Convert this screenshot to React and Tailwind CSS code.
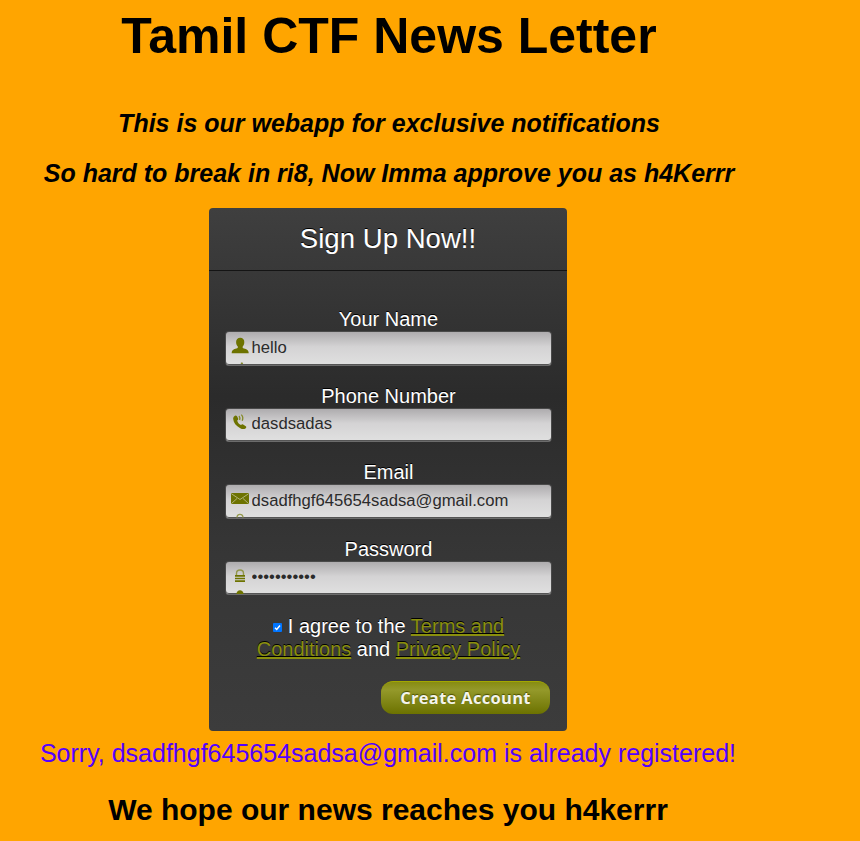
const INPUT =
  "h-[34.500px] w-full overflow-hidden rounded-[4px] border border-t-[#4a4a4a] border-x-[#4a4a4a] border-b-[#6c6c6c] bg-[linear-gradient(to_bottom,#aeacae_0%,#d4d3d4_45%,#e0e0e0_100%)] shadow-[inset_0_-1px_0_#555] flex text-[16.67px] text-[#2b2b2b] [text-shadow:0_1px_0_#fff]";

function UserIcon() {
  return (
    <svg width="26" height="33" viewBox="0 0 26 33" fill="#6d7300">
      <path d="M14.200 5.800c2.600 0 4.100 1.600 4.100 4.200 0 2-.7 3.600-1.700 4.700 0 1 .3 1.500 1.400 1.900 2.700.8 4.700 1.500 4.700 4.700H5.700c0-3.200 2-3.900 4.700-4.700 1.100-.4 1.500-.9 1.500-1.900-1.100-1.100-1.800-2.700-1.800-4.700 0-2.600 1.600-4.200 4.100-4.200z" />
      <path d="M15 30.500h1.500l.7 1.500h-2.500z" opacity=".8" />
    </svg>
  );
}

function PhoneIcon() {
  return (
    <svg width="26" height="33" viewBox="0 0 26 33" fill="none">
      <path
        d="M8.300 7.200c.8-.8 2-.9 2.700.1l1.200 2.200c.3.800-.1 1.300-1 1.900.5 2.200 1.700 3.500 3.800 4.700.7-.9 1.400-1.100 2.100-.7l2.700 1.900c.8.700.6 1.500-.3 2.100-1.500 1-3.400.9-5.200-.2C9.900 17.100 7.600 13.800 7.200 10.100c-.1-1.200.3-2.200 1.100-2.900z"
        fill="#6d7300"
      />
      <path d="M13 7q1.300 1.700.6 4M15.300 5.600q2.500 2.500.9 6.100" stroke="#848a28" strokeWidth="1.300" />
    </svg>
  );
}

function MailIcon() {
  return (
    <svg width="26" height="33" viewBox="0 0 26 33" fill="none">
      <rect x="5" y="8" width="18" height="11" rx="1" fill="#6d7300" />
      <path d="M5.500 8.800l8.500 5.700 8.500-5.700M5.500 18.500l5.500-5M22.500 18.500l-5.500-5" stroke="#b7ba83" strokeWidth=".9" />
      <path d="M11 32.500c0-4.300 6-4.300 6 0" stroke="#959a4d" strokeWidth="1.300" />
    </svg>
  );
}

function LockIcon() {
  return (
    <svg width="26" height="33" viewBox="0 0 26 33" fill="none">
      <path d="M10.500 13V11.500c0-4.600 7-4.600 7 0V13" stroke="#92974a" strokeWidth="1.400" />
      <path d="M9 13h10v1.800H9zM9 15.800h10v1.500H9zM9 18.200h10V20H9z" fill="#6d7300" />
      <path d="M10.300 32.500c0-5.800 7.400-5.800 7.400 0z" fill="#6d7300" />
    </svg>
  );
}

function Field({ label, icon, value, type }) {
  return (
    <div className="h-[76.600px]">
      <label className="block text-center text-[20px] leading-[24px] text-white [text-shadow:0_-1px_0_#000]">{label}</label>
      <div className={INPUT}>
        <span className="w-[25.600px] shrink-0">{icon}</span>
        <input type={type} defaultValue={value} className="h-[31px] min-w-0 flex-1 bg-transparent outline-none" />
      </div>
    </div>
  );
}

export default function App() {
  return (
    <main className="h-[841px] w-full overflow-hidden bg-[#ffa500] font-['Liberation_Sans',Arial,sans-serif] text-black">
      <div className="flex w-[776px] flex-col items-center whitespace-nowrap pt-[8px]">
        <h1 className="pl-[2px] text-[50px] font-bold leading-[57px]">Tamil CTF News Letter</h1>
        <p className="mt-[44px] pl-[2px] text-[25px] font-bold italic leading-[29px]">This is our webapp for exclusive notifications</p>
        <p className="mt-[21px] pl-[2px] text-[25px] font-bold italic leading-[29px]">So hard to break in ri8, Now Imma approve you as h4Kerrr</p>

        <form className="mt-[20px] h-[523px] w-[358px] rounded-[4px] bg-[linear-gradient(to_bottom,#3f3f3f_0%,#2b2b2b_36%,#363636_66%,#3c3c3c_100%)]">
          <h2 className="h-[63px] border-b border-[#141414] pt-[15px] text-center text-[27.600px] leading-[32px] text-white [text-shadow:0_-1px_0_#000]">
            Sign Up Now!!
          </h2>
          <div className="pl-[16px] pr-[15px] pt-[36px]">
            <Field label="Your Name" icon={<UserIcon />} value="hello" type="text" />
            <Field label="Phone Number" icon={<PhoneIcon />} value="dasdsadas" type="text" />
            <Field label="Email" icon={<MailIcon />} value="dsadfhgf645654sadsa@gmail.com" type="text" />
            <Field label="Password" icon={<LockIcon />} value="hellohello1" type="password" />
            <p className="mt-[2px] text-center text-[20px] leading-[23px] text-white [text-shadow:0_-1px_0_#000]">
              <span className="mr-[6px] inline-block size-[9px] rounded-[1px] bg-[#0075ff] align-[1px]">
                <svg viewBox="0 0 9 9" className="block size-[9px]" fill="none">
                  <path d="M2 4.800l1.700 1.700L7 2.500" stroke="#fff" strokeWidth="1.400" />
                </svg>
              </span>
              I agree to the <a className="text-[#8a8f0e] underline">Terms and</a>
              <br />
              <a className="text-[#8a8f0e] underline">Conditions</a> and <a className="text-[#8a8f0e] underline">Privacy Policy</a>
            </p>
            <div className="mt-[20px] flex justify-end pr-[2px]">
              <button
                type="button"
                className="h-[33px] w-[169px] rounded-[12px] border-t border-[#a3a800] bg-[linear-gradient(to_bottom,#878c12_0%,#94992a_25%,#6c7200_100%)] font-['Open_Sans','Noto_Sans',sans-serif] text-[16.500px] font-bold leading-[30px] tracking-[0.300px] text-[#f4f4ec] [text-shadow:0_-1px_1px_#4a4e00]"
              >
                Create Account
              </button>
            </div>
          </div>
        </form>

        <p className="mt-[8px] text-[25px] leading-[29px] text-[#5400ff]">Sorry, dsadfhgf645654sadsa@gmail.com is already registered!</p>
        <h3 className="mt-[25px] text-[30px] font-bold leading-[34px]">We hope our news reaches you h4kerrr</h3>
      </div>
    </main>
  );
}
